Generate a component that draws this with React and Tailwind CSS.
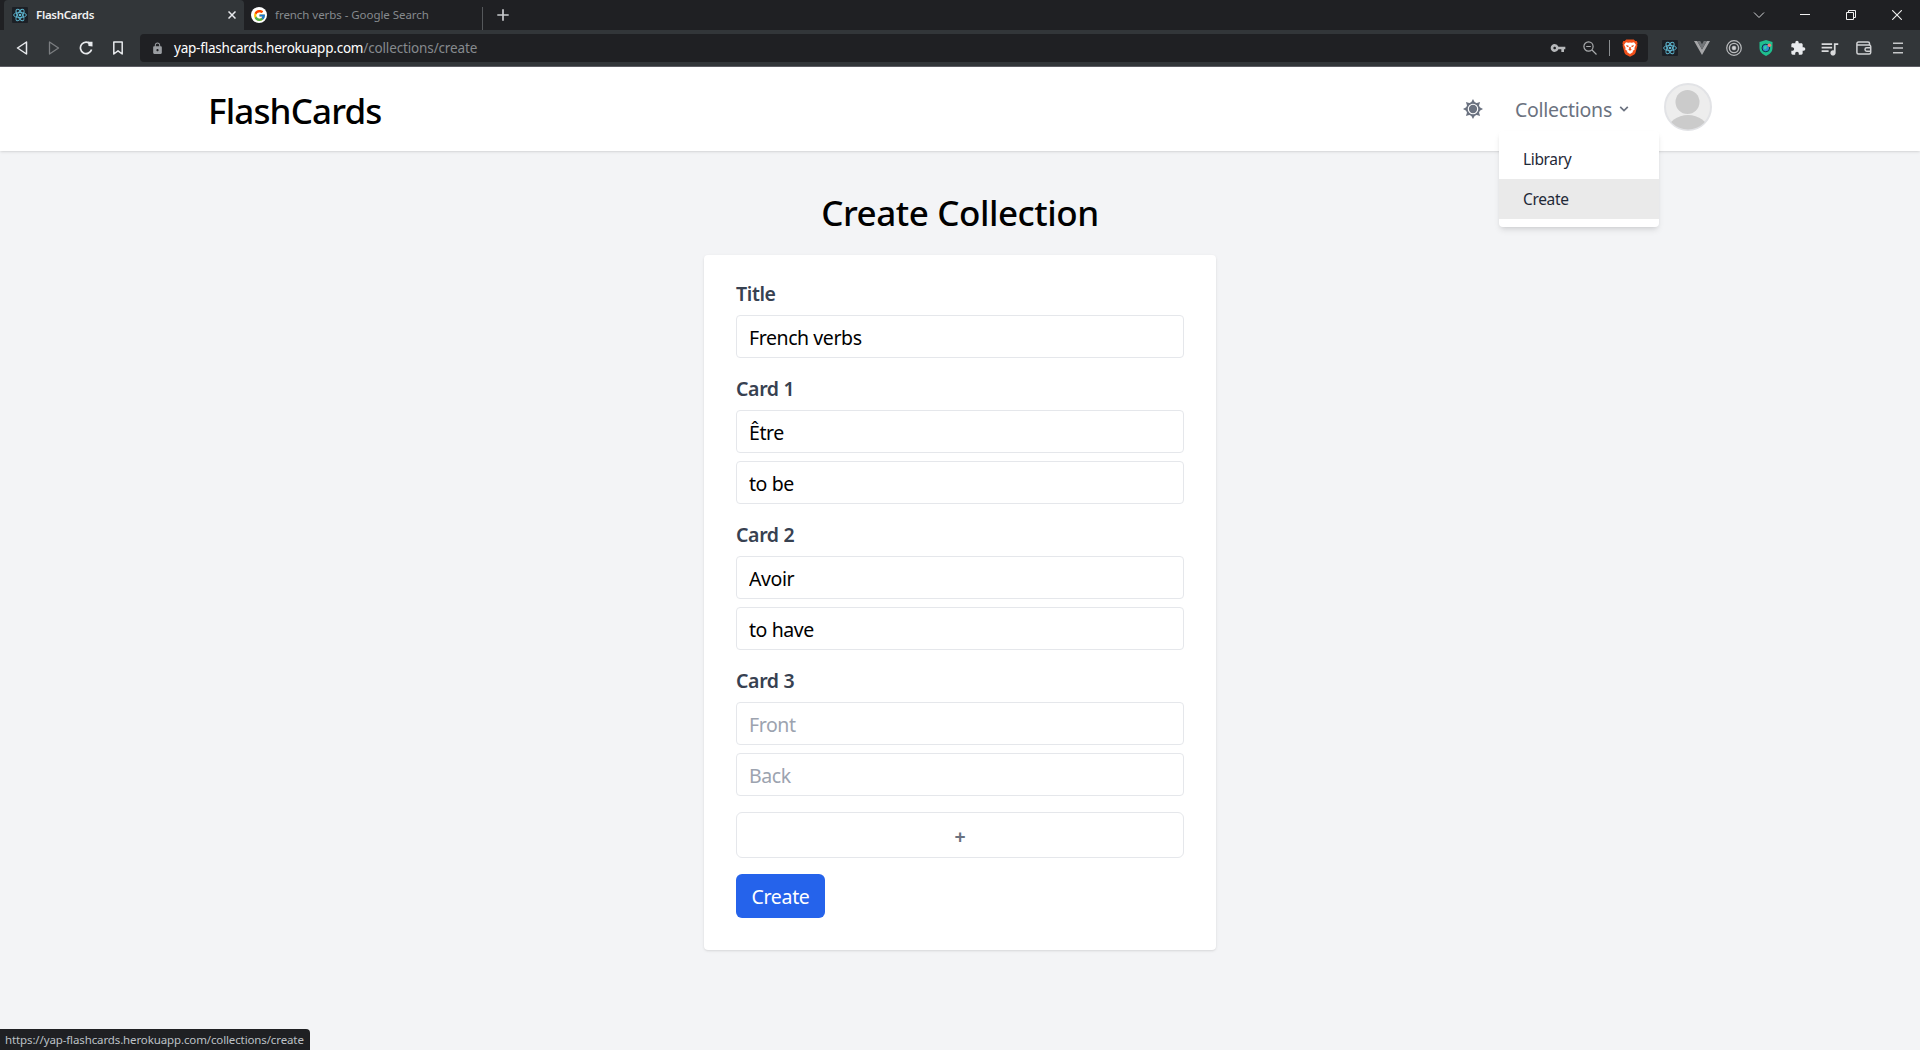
import React from "react";
import { FcGoogle } from "react-icons/fc";
import { MdVpnKey, MdExtension, MdQueueMusic, MdLock } from "react-icons/md";

function ReactMark({ className }) {
  return (
    <svg viewBox="0 0 16 16" className={className}>
      <rect width="16" height="16" rx="1" fill="#1c2026" />
      <g fill="none" stroke="#5fb8d2" strokeWidth="0.9">
        <ellipse cx="8" cy="8" rx="6.4" ry="2.6" />
        <ellipse cx="8" cy="8" rx="6.4" ry="2.6" transform="rotate(60 8 8)" />
        <ellipse cx="8" cy="8" rx="6.4" ry="2.6" transform="rotate(120 8 8)" />
      </g>
      <circle cx="8" cy="8" r="1.3" fill="#5fb8d2" />
    </svg>
  );
}

function BraveMark() {
  return (
    <svg viewBox="0 0 16 18" className="h-[18px] w-4">
      <path d="M4.2 0.6h7.6l1.4 1.5 1.5-.1.9 2.2-.5 1.3.3 1.2-1.9 7c-.3 1-.9 1.6-1.6 2.1L8 17.8l-3.9-2c-.7-.5-1.3-1.1-1.6-2.1l-1.9-7 .3-1.2L.4 4.2 1.300 2l1.500.1z" fill="#f1501b" />
      <path d="M4 3.200l2.200.6L8 3.400l1.800.4 2.200-.6 1.900 2.600-1.500 3.100.3 1.500-2.100 1.700.4 1L8 15l-3-1.900.4-1-2.100-1.700.3-1.500-1.500-3.100z" fill="#fff" />
      <path d="M4 6l2.600.7-.2 1.500L4.900 7.700zM12 6l-2.600.7.2 1.500 1.500-.5zM7.300 8h1.400l.2 2 .9.600L8 11.700l-1.800-1.100.9-.6z" fill="#f1501b" />
    </svg>
  );
}

function SunIcon() {
  return (
    <svg viewBox="0 0 20 20" className="h-5 w-5 text-[#6b7280]">
      <g fill="currentColor">
        {[0, 45, 90, 135, 180, 225, 270, 315].map((a) => (
          <path key={a} d="M10 0l2.400 4.500H7.600z" transform={`rotate(${a} 10 10)`} />
        ))}
        <circle cx="10" cy="10" r="7" />
      </g>
      <circle cx="10" cy="10" r="4.700" fill="none" stroke="#fff" strokeWidth="1.100" />
    </svg>
  );
}

function Cell({ children, className = "w-8" }) {
  return <div className={`flex shrink-0 items-center justify-center ${className}`}>{children}</div>;
}

function TabBar() {
  return (
    <div className="flex h-[30px] bg-[#1f2023]">
      <div className="ml-1 flex w-[240px] items-center rounded-t bg-[#323639] pl-2">
        <ReactMark className="h-4 w-4" />
        <span className="ml-2 text-[11.5px] font-semibold tracking-[-0.28px] text-[#f0f1f2]">FlashCards</span>
        <svg viewBox="0 0 8 8" className="mr-2 ml-auto h-2 w-2" stroke="#e8eaed" strokeWidth="1.500">
          <path d="M.5.5l7 7M7.500.500l-7 7" />
        </svg>
      </div>
      <div className="flex w-[239px] items-center pl-[7px]">
        <span className="flex h-4 w-4 items-center justify-center rounded-full bg-white">
          <FcGoogle className="h-[13px] w-[13px]" />
        </span>
        <span className="ml-2 text-[11.5px] tracking-[-0.05px] text-[#868a8e]">french verbs - Google Search</span>
        <span className="mt-[7px] ml-auto h-[23px] w-px bg-[#55585b]" />
      </div>
      <svg viewBox="0 0 12 12" className="mt-[9px] ml-[14px] h-3 w-3" stroke="#c8cacd" strokeWidth="1.700">
        <path d="M6 .3v11.400M.3 6h11.400" />
      </svg>
      <div className="ml-auto flex pb-px">
        <Cell className="w-[46px]">
          <svg viewBox="0 0 12 12" className="h-3 w-3" fill="none" stroke="#d4d6d8">
            <path d="M1 3.500l5 5 5-5" />
          </svg>
        </Cell>
        <Cell className="w-[46px]">
          <svg viewBox="0 0 10 10" className="h-2.5 w-2.5" stroke="#f1f1f1">
            <path d="M0 4.500h10" />
          </svg>
        </Cell>
        <Cell className="w-[46px]">
          <svg viewBox="0 0 10 10" className="h-2.5 w-2.5" fill="none" stroke="#f1f1f1">
            <path d="M.5 2.500h7v7h-7zM2.500 2.500v-2h7v7h-2" />
          </svg>
        </Cell>
        <Cell className="w-[46px]">
          <svg viewBox="0 0 10 10" className="h-2.5 w-2.5" stroke="#f1f1f1" strokeWidth="1.100">
            <path d="M.2.2l9.600 9.600M9.800.2L.2 9.800" />
          </svg>
        </Cell>
      </div>
    </div>
  );
}

function AddressBar() {
  return (
    <div className="flex h-7 w-[1508px] items-center rounded bg-[#1f2023] pr-[10px] pl-[11px]">
      <MdLock className="h-[13px] w-[13px] text-[#9a9da1]" />
      <span className="ml-[10px] pt-px text-[13.5px] tracking-[-0.22px] text-white">yap-flashcards.herokuapp.com</span>
      <span className="pt-px text-[13.5px] tracking-[-0.14px] text-[#868a8e]">/collections/create</span>
      <MdVpnKey className="ml-auto h-4 w-4 text-[#b6b8ba]" />
      <svg viewBox="0 0 14 14" className="ml-[17px] h-[14px] w-[14px]" fill="none" stroke="#a9abad" strokeWidth="1.200">
        <circle cx="5.500" cy="5.500" r="4.600" />
        <path d="M9 9l4.500 4.500M3.200 5.500h4.600" />
      </svg>
      <span className="mr-3 ml-3 h-4 w-px bg-[#8b8e91]" />
      <BraveMark />
    </div>
  );
}

function Toolbar() {
  return (
    <div className="flex h-[37px] items-center border-b border-[#5f5f66] bg-[#323639] pb-1 pt-1">
      <div className="mr-1.5 ml-1.5 flex">
        <Cell>
          <svg viewBox="0 0 12 14" className="h-[14px] w-3" fill="none" stroke="#e8eaed" strokeWidth="1.500" strokeLinejoin="round">
            <path d="M10.500 1v12L1.500 7z" />
          </svg>
        </Cell>
        <Cell>
          <svg viewBox="0 0 12 14" className="h-[14px] w-3" fill="none" stroke="#7b7e81" strokeWidth="1.300" strokeLinejoin="round">
            <path d="M1.500 1v12l9-6z" />
          </svg>
        </Cell>
        <Cell>
          <svg viewBox="0 0 14 14" className="h-[14px] w-[14px]" fill="none" stroke="#e8eaed" strokeWidth="1.700">
            <path d="M11.500 3.200A5.700 5.700 0 1 0 12.600 8.500" />
            <path d="M9 0.800h4.500v4.800L9.500 5z" fill="#e8eaed" stroke="none" />
          </svg>
        </Cell>
        <Cell>
          <svg viewBox="0 0 12 14" className="h-[14px] w-3" fill="none" stroke="#e8eaed" strokeWidth="1.500" strokeLinejoin="round">
            <path d="M1.800 1h8.400v12L6 9.800 1.800 13z" />
          </svg>
        </Cell>
      </div>
      <AddressBar />
      <div className="ml-1.5 flex">
        <Cell>
          <ReactMark className="h-4 w-4" />
        </Cell>
        <Cell>
          <svg viewBox="0 0 16 14" className="h-[14px] w-4">
            <path d="M0 0h3.200L8 8.400 12.800 0H16L8 14z" fill="#a5a6a8" />
            <path d="M3.200 0h3L8 3.200 9.800 0h3L8 8.400z" fill="#727578" />
          </svg>
        </Cell>
        <Cell>
          <svg viewBox="0 0 16 16" className="h-4 w-4" fill="none" stroke="#b9bbbd">
            <circle cx="8" cy="8" r="7.300" strokeWidth="1.200" />
            <circle cx="8" cy="8" r="4.600" strokeWidth="1.400" />
            <circle cx="8" cy="8" r="2" fill="#d0d1d2" strokeWidth="0.500" />
          </svg>
        </Cell>
        <Cell>
          <svg viewBox="0 0 14 16" className="h-4 w-[14px]">
            <path d="M7 0l6.500 2v6c0 3.800-2.800 6.400-6.500 8C3.300 14.400.5 11.800.5 8V2z" fill="#1fbf8f" />
            <circle cx="6.800" cy="8" r="3.800" fill="#2f8fd0" stroke="#0c3440" strokeWidth="1" />
            <path d="M5 6.500l2-1 1 1.500-1.500 2.500-1.500-.5z" fill="#2fd0a0" />
            <circle cx="10.400" cy="5.200" r="1.800" fill="#f07f74" />
          </svg>
        </Cell>
        <Cell>
          <MdExtension className="h-4 w-4 text-[#e8eaed]" />
        </Cell>
        <Cell>
          <MdQueueMusic className="mr-0.5 h-[21px] w-[21px] text-[#d9dadc]" />
        </Cell>
        <Cell className="w-9">
          <svg viewBox="0 0 16 14" className="h-[14px] w-4" fill="none" stroke="#d0d2d4" strokeWidth="1.500">
            <path d="M13.500 4V2.500c0-.9-.6-1.500-1.500-1.500H2.500C1.500 1 .9 1.700.9 2.500v9c0 .9.700 1.500 1.600 1.500h10.700c1 0 1.500-.6 1.500-1.500V5.500c0-.9-.6-1.500-1.500-1.500H1.500" />
            <path d="M15 6.800h-4.300a1.700 1.700 0 0 0 0 3.400H15" />
          </svg>
        </Cell>
        <Cell>
          <svg viewBox="0 0 10 12" className="h-3 w-2.5" stroke="#c6c8ca" strokeWidth="1.600">
            <path d="M0 1.200h10M0 6h10M0 10.800h10" />
          </svg>
        </Cell>
      </div>
    </div>
  );
}

function Dropdown() {
  return (
    <div className="absolute top-[64px] left-[-16px] z-10 w-40 rounded bg-white pt-2 pb-2 shadow-md">
      {["Library", "Create"].map((t) => (
        <div
          key={t}
          className={`flex h-10 items-center pt-0.5 pl-6 text-[15.5px] tracking-[-0.34px] text-[#1f2937] ${t === "Create" ? "bg-[#eaeaea]" : ""}`}
        >
          {t}
        </div>
      ))}
    </div>
  );
}

function Header() {
  return (
    <header className="h-[84px] bg-white shadow">
      <div className="mx-auto flex h-full w-[1504px] items-center">
        <h1 className="mt-1 text-[35px] font-medium tracking-[-0.85px] text-black">FlashCards</h1>
        <div className="ml-auto flex h-full items-center">
          <SunIcon />
          <div className="relative ml-8 flex h-full items-center text-[#6b7280]">
            <span className="pt-0.5 text-[19.5px] tracking-[-0.25px]">Collections</span>
            <svg viewBox="0 0 10 6" className="ml-[7px] h-1.5 w-2.5" fill="none" stroke="currentColor" strokeWidth="1.700">
              <path d="M1.200.8L5 4.600 8.800.8" />
            </svg>
            <Dropdown />
          </div>
          <svg viewBox="0 0 48 48" className="mb-1 ml-[35px] h-12 w-12">
            <clipPath id="avatar">
              <circle cx="24" cy="24" r="22.500" />
            </clipPath>
            <circle cx="24" cy="24" r="23" fill="#ededed" stroke="#e2e3e6" strokeWidth="2" />
            <g fill="#cbcbcb" clipPath="url(#avatar)">
              <circle cx="23.500" cy="19" r="12" />
              <ellipse cx="24" cy="47" rx="20" ry="15" />
            </g>
          </svg>
        </div>
      </div>
    </header>
  );
}

function Field({ value, placeholder }) {
  return (
    <input
      readOnly
      defaultValue={value}
      placeholder={placeholder}
      className="block h-[43px] w-full rounded border border-[#e5e7eb] bg-white px-3 pt-0.5 text-[19.5px] tracking-[-0.42px] text-black outline-none placeholder:text-[#9ca3af]"
    />
  );
}

function Group({ label, children }) {
  return (
    <div className="mb-4">
      <div className="mb-2 h-7 pt-px text-[19.5px] leading-7 font-semibold tracking-[-0.36px] text-[#374151]">{label}</div>
      <div className="flex flex-col gap-2">{children}</div>
    </div>
  );
}

const cards = [
  ["Être", "to be"],
  ["Avoir", "to have"],
  ["", ""],
];

export default function App() {
  return (
    <div className="flex h-[1050px] w-[1920px] flex-col overflow-hidden bg-[#f3f4f6] font-['Noto_Sans','Open_Sans',sans-serif]">
      <TabBar />
      <Toolbar />
      <Header />
      <main className="flex flex-col items-center">
        <h2 className="mt-10 mb-4 h-12 text-[35px] leading-[44px] font-medium tracking-[-0.43px] text-black">Create Collection</h2>
        <form className="w-[512px] rounded bg-white px-8 pt-6 pb-8 shadow">
          <Group label="Title">
            <Field value="French verbs" />
          </Group>
          {cards.map(([front, back], i) => (
            <Group key={i} label={`Card ${i + 1}`}>
              <Field value={front} placeholder="Front" />
              <Field value={back} placeholder="Back" />
            </Group>
          ))}
          <button type="button" className="flex h-[46px] w-full items-center justify-center rounded-md border border-[#e5e7eb] bg-white pt-[3px] text-[19.5px] font-bold text-[#6b7280]">
            +
          </button>
          <button type="button" className="mt-4 block h-[44px] w-[89px] rounded-md bg-[#2563eb] pt-0.5 text-[19.5px] tracking-[-0.3px] text-white">
            Create
          </button>
        </form>
      </main>
      <div className="mt-auto flex h-[21px] w-[310px] items-center rounded-tr bg-[#1f2023] pl-[5px] text-[11.5px] tracking-[-0.12px] text-[#bdc1c6]">
        https://yap-flashcards.herokuapp.com/collections/create
      </div>
    </div>
  );
}
